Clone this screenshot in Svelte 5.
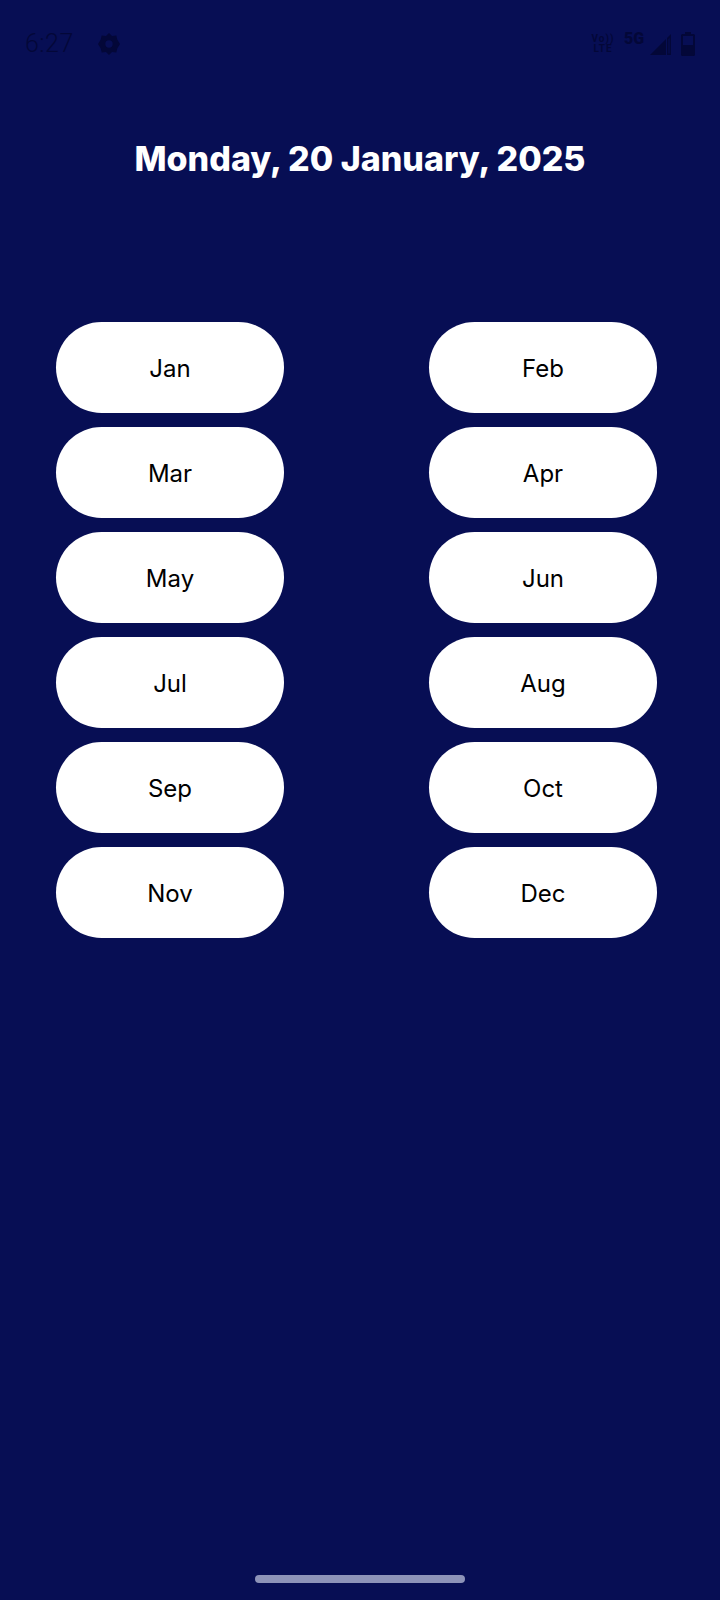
<script lang="ts">
  const months = ["Jan", "Feb", "Mar", "Apr", "May", "Jun", "Jul", "Aug", "Sep", "Oct", "Nov", "Dec"];
</script>

<div class="screen">
  <header class="status-bar">
    <div class="left">
      <span class="clock">6:27</span>
      <svg class="gear" viewBox="0 0 24 24" width="24" height="24" aria-hidden="true">
        <path fill-rule="evenodd" d="M12 0l3.300 3.400 4.700-.8 1 4.600L24 12l-3 4.800-1 4.600-4.700-.8L12 24l-3.300-3.400-4.700.8-1-4.600L0 12l3-4.800 1-4.600 4.700.8zM12 8a4 4 0 1 0 0 8 4 4 0 0 0 0-8z" />
      </svg>
    </div>
    <div class="right">
      <span class="volte"><span>Vo))</span><span>LTE</span></span>
      <span class="five-g">5G</span>
      <svg class="signal" viewBox="0 0 21 21" width="21" height="21" aria-hidden="true">
        <path d="M0 21L16 5v16z" />
        <path d="M17 4l4-4v21h-4zM18.500 5V19.500h1V4z" fill-rule="evenodd" />
      </svg>
      <svg class="battery" viewBox="0 0 14 24" width="14" height="24" aria-hidden="true">
        <path fill-rule="evenodd" d="M4 0h6v2h2.500A1.500 1.500 0 0 1 14 3.500V22.500A1.500 1.500 0 0 1 12.500 24H1.500A1.500 1.500 0 0 1 0 22.500V3.500A1.500 1.500 0 0 1 1.500 2H4zM2 4v9h10V4z" />
      </svg>
    </div>
  </header>

  <h1>Monday, 20 January, 2025</h1>

  <div class="months">
    {#each months as month}
      <button type="button">{month}</button>
    {/each}
  </div>

  <div class="home-indicator"></div>
</div>

<style>
  :global(body) {
    margin: 0;
    background: #070e54;
  }

  .screen {
    display: flex;
    flex-direction: column;
    height: 1600px;
    background: #070e54;
    font-family: Inter, "Liberation Sans", sans-serif;
    box-sizing: border-box;
  }

  .status-bar {
    display: flex;
    justify-content: space-between;
    align-items: center;
    height: 24px;
    padding: 32px 25px 0 25px;
    color: #030738;
    fill: #030738;
  }

  .left,
  .right {
    display: flex;
    align-items: center;
  }

  .clock {
    font-family: Roboto, sans-serif;
    font-size: 25px;
    font-weight: 300;
    line-height: 24px;
    width: 47px;
    letter-spacing: 0.5px;
  }

  .gear {
    margin-left: 26px;
    width: 22px;
    height: 22px;
  }

  .volte {
    display: flex;
    flex-direction: column;
    align-items: center;
    width: 24px;
    font-family: Roboto, sans-serif;
    font-size: 10px;
    font-weight: 700;
    line-height: 10px;
    letter-spacing: 1px;
    margin-right: 9px;
  }

  .five-g {
    font-family: Roboto, sans-serif;
    font-size: 16px;
    font-weight: 900;
    line-height: 16px;
    width: 20px;
    margin-right: 6px;
    transform: translateY(-5px);
  }

  .battery {
    margin-left: 10px;
  }

  h1 {
    margin: 83px 0 0;
    text-align: center;
    color: #fff;
    font-size: 34px;
    font-weight: 800;
    line-height: 40px;
  }

  .months {
    display: grid;
    grid-template-columns: 228px 228px;
    justify-content: space-between;
    gap: 14px 0;
    margin-top: 143px;
    padding: 0 63px 0 56px;
  }

  button {
    height: 91px;
    border: none;
    border-radius: 46px;
    background: #fff;
    color: #000;
    font-family: inherit;
    font-size: 24px;
    font-weight: 400;
    padding: 2px 0 0;
  }

  .home-indicator {
    width: 210px;
    height: 8px;
    border-radius: 4px;
    background: #8d93b8;
    margin: auto auto 17px;
  }
</style>
